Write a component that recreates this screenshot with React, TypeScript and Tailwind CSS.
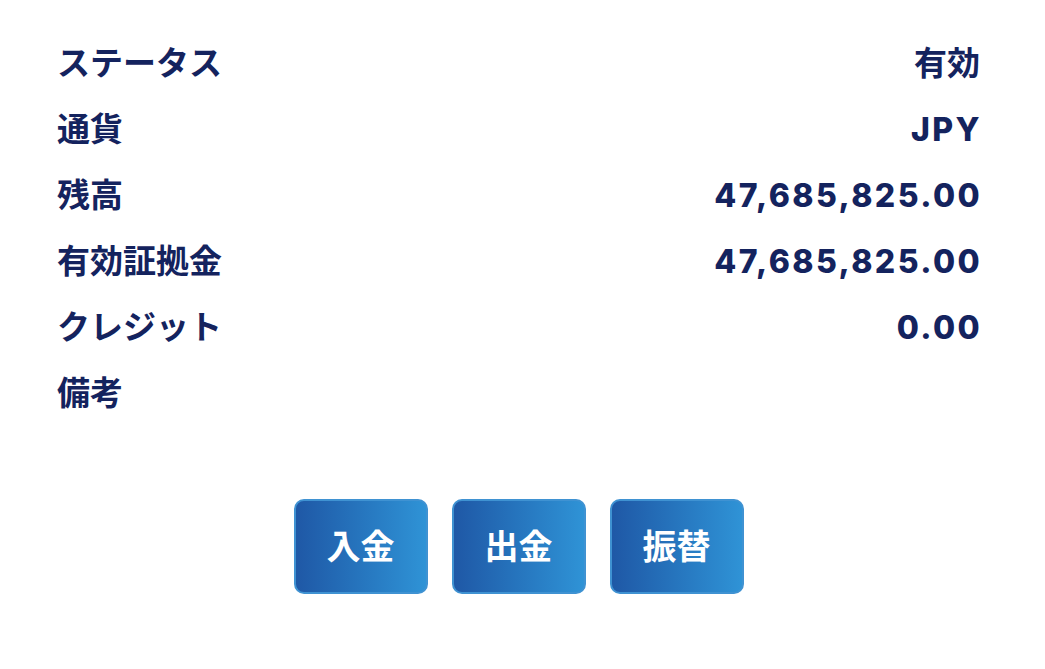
import React from "react";

const rows: { label: string; value: string; latin?: boolean }[] = [
  { label: "ステータス", value: "有効" },
  { label: "通貨", value: "JPY", latin: true },
  { label: "残高", value: "47,685,825.00", latin: true },
  { label: "有効証拠金", value: "47,685,825.00", latin: true },
  { label: "クレジット", value: "0.00", latin: true },
  { label: "備考", value: "" },
];

const actions = ["入金", "出金", "振替"];

export default function App() {
  return (
    <div
      className="min-h-screen w-full bg-white text-[#14235e]"
      style={{ fontFamily: '"Inter", "Noto Sans CJK JP", sans-serif' }}
    >
      <div className="pl-[57px] pr-[65px] pt-[31px]">
        {/* Account details */}
        <div className="flex flex-col">
          {rows.map((row) => (
            <div
              key={row.label}
              className="flex h-[66px] items-center justify-between font-bold"
            >
              <span className="text-[33px]">{row.label}</span>
              {row.latin ? (
                <span className="-mr-[2px] text-[32px] font-extrabold tracking-[0.075em]">
                  {row.value}
                </span>
              ) : (
                <span className="text-[33px]">{row.value}</span>
              )}
            </div>
          ))}
        </div>

        {/* Actions */}
        <div className="mt-[72px] flex justify-center gap-[24px]">
          {actions.map((label) => (
            <button
              key={label}
              className="flex h-[95px] w-[134px] items-center justify-center rounded-[10px] border-2 border-[#3f92d2] bg-gradient-to-r from-[#1f58a6] to-[#2f93d6] text-[34px] font-bold text-white"
            >
              {label}
            </button>
          ))}
        </div>
      </div>
    </div>
  );
}
